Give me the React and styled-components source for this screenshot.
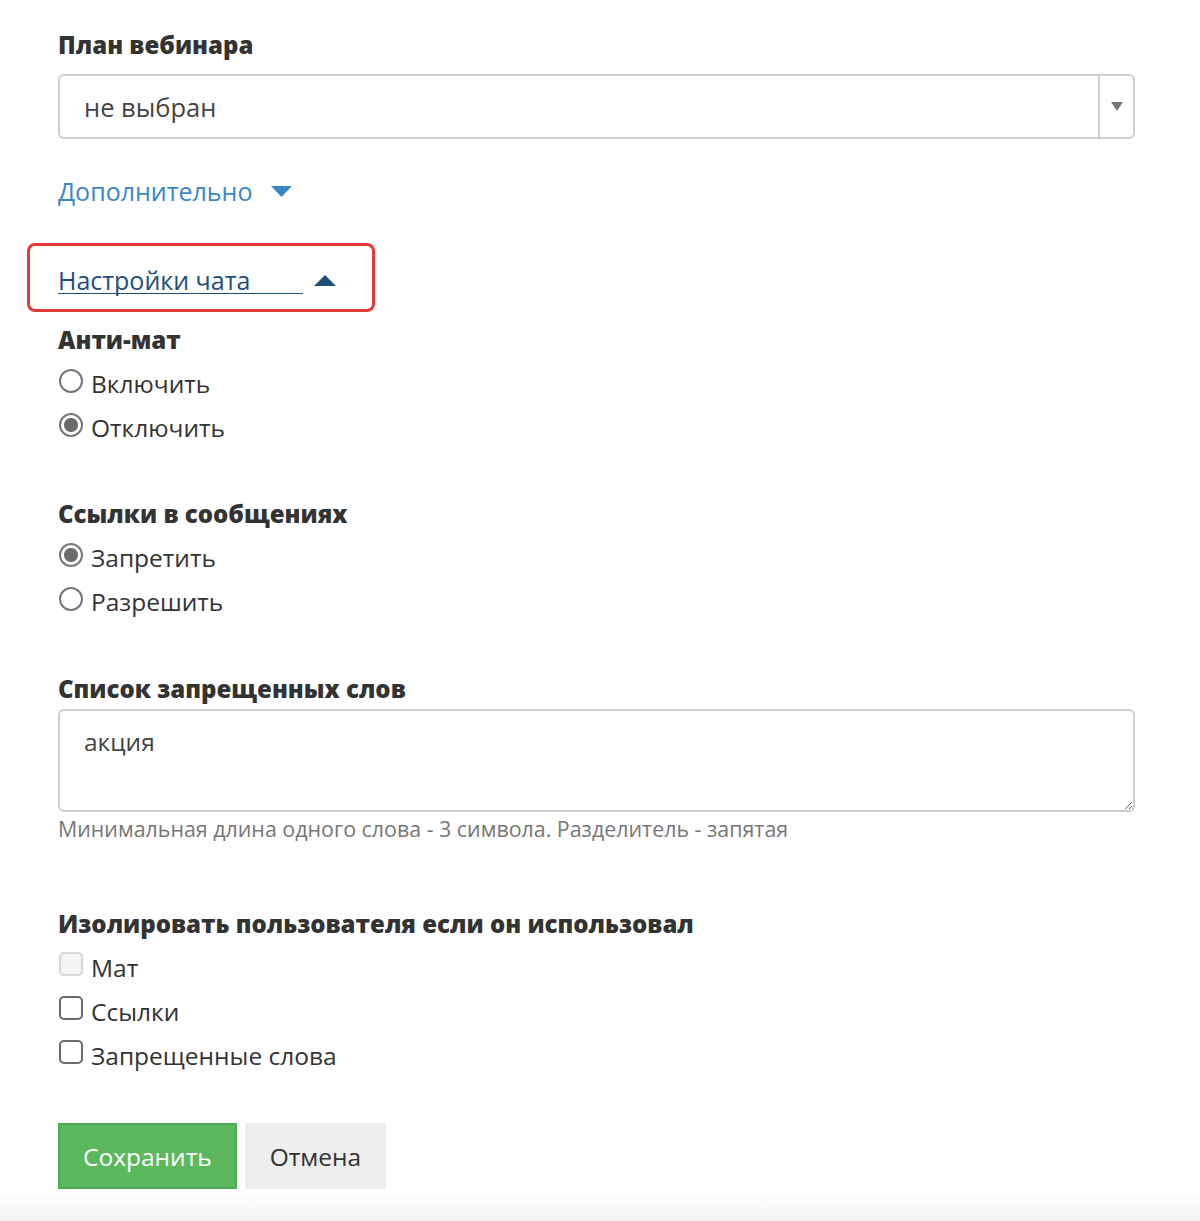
import React, { useState } from "react";
import styled, { createGlobalStyle } from "styled-components";

const GlobalStyle = createGlobalStyle`
    body {
        margin: 0;
        background: #fff;
        font-family: "Open Sans", "Noto Sans", sans-serif;
        color: #333;
    }
`;

const Page = styled.div`
    min-height: 1221px;
    box-sizing: border-box;
    padding: 28px 65px 0 58px;
    background: linear-gradient(to bottom, #fff 0, #fff 1190px, #f3f3f3 1221px);
`;

const Label = styled.div`
    font-size: 24px;
    font-weight: 800;
    color: #333;
    line-height: 34px;
    margin-bottom: ${props => props.mb ?? 4}px;
`;

const SelectBox = styled.div`
    display: flex;
    height: 65px;
    box-sizing: border-box;
    border: 2px solid #cfcfcf;
    border-radius: 6px;
    margin-top: 12px;
`;

const SelectValue = styled.div`
    flex: 1;
    display: flex;
    align-items: center;
    padding-left: 24px;
    font-size: 25.5px;
    color: #444;
`;

const SelectArrow = styled.div`
    width: 33px;
    border-left: 2px solid #cfcfcf;
    display: flex;
    align-items: center;
    justify-content: center;
`;

const More = styled.a`
    display: flex;
    align-items: center;
    gap: 19px;
    width: fit-content;
    margin-top: 35px;
    font-size: 25px;
    line-height: 34px;
    color: #3a87c7;
    text-decoration: none;
    cursor: pointer;
`;

const Highlight = styled.div`
    display: flex;
    align-items: flex-end;
    gap: 11px;
    width: 348px;
    height: 69px;
    box-sizing: border-box;
    margin: 35px 0 0 -31px;
    padding: 0 0 15px 28px;
    border: 3px solid #e43b36;
    border-radius: 8px;
    cursor: pointer;
`;

const Underlined = styled.span`
    display: block;
    width: 245px;
    font-size: 25px;
    line-height: 25px;
    color: #1f4f7c;
    border-bottom: 1px solid #1f4f7c;
`;

const Group = styled.div`
    margin-top: ${props => props.mt || 0}px;
    margin-bottom: ${props => props.mb || 0}px;
`;

const Option = styled.label`
    display: flex;
    align-items: center;
    gap: 8px;
    height: 44px;
    font-size: 24.5px;
    color: #333;
    cursor: pointer;
`;

const Radio = styled.input.attrs({ type: "radio" })`
    appearance: none;
    margin: 0 0 0 1px;
    width: 24px;
    height: 24px;
    border: 2px solid #777;
    border-radius: 50%;
    box-sizing: border-box;
    background: #fff;
    position: relative;
    top: -2px;

    &:checked {
        background: radial-gradient(circle, #6a6a6a 0 6.5px, #fff 7.5px);
    }
`;

const Checkbox = styled.input.attrs({ type: "checkbox" })`
    appearance: none;
    margin: 0 0 0 1px;
    width: 24px;
    height: 24px;
    border: 2px solid ${props => props.disabled ? "#d8d8d8" : "#6a6a6a"};
    border-radius: 5px;
    box-sizing: border-box;
    background: ${props => props.disabled ? "#f4f4f4" : "#fff"};
    position: relative;
    top: -3px;
`;

const TextArea = styled.textarea`
    display: block;
    width: 100%;
    height: 103px;
    box-sizing: border-box;
    margin-top: 3px;
    padding: 14px 24px;
    border: 2px solid #cfcfcf;
    border-radius: 6px;
    font-family: "Open Sans", "Noto Sans", sans-serif;
    font-size: 24.5px;
    color: #444;
    resize: vertical;
    outline: none;
`;

const Hint = styled.div`
    font-size: 21.4px;
    color: #777;
    margin-top: 4px;
    line-height: 26px;
`;

const Buttons = styled.div`
    display: flex;
    gap: 8px;
`;

const Button = styled.button`
    height: 66px;
    padding: 0 ${props => props.px}px;
    font-family: "Open Sans", "Noto Sans", sans-serif;
    font-size: 24.5px;
    border: 2px solid ${props => props.primary ? "#4cae4c" : "#eeeeee"};
    background: ${props => props.primary ? "#5cb85c" : "#eeeeee"};
    color: ${props => props.primary ? "#fff" : "#333"};
    cursor: pointer;
`;

const Arrow = styled.svg`
    display: block;
    flex: none;
    margin-bottom: ${props => props.mb || 0}px;
`;

const Triangle = ({ dir, color, w, h, mb }) => (
    <Arrow width={w} height={h} viewBox={`0 0 ${w} ${h}`} mb={mb}>
        {dir === "down"
            ? <polygon points={`0,0 ${w},0 ${w / 2},${h}`} fill={color} />
            : <polygon points={`0,${h} ${w},${h} ${w / 2},0`} fill={color} />}
    </Arrow>
);

export default function App() {
    const [antiMat, setAntiMat] = useState("off")
    const [links, setLinks] = useState("deny")

    return (
        <Page>
            <GlobalStyle />
            <Label mb={0}>План вебинара</Label>
            <SelectBox>
                <SelectValue>не выбран</SelectValue>
                <SelectArrow>
                    <Triangle dir="down" color="#777" w={12} h={9} />
                </SelectArrow>
            </SelectBox>

            <More>
                <span>Дополнительно</span>
                <Triangle dir="down" color="#3a87c7" w={21} h={11} />
            </More>

            <Highlight>
                <Underlined>Настройки чата</Underlined>
                <Triangle dir="up" color="#1f4f7c" w={22} h={11} mb={8} />
            </Highlight>

            <Group mt={11} mb={48}>
                <Label>Анти-мат</Label>
                <Option>
                    <Radio name="antimat" checked={antiMat === "on"} onChange={() => setAntiMat("on")} />
                    Включить
                </Option>
                <Option>
                    <Radio name="antimat" checked={antiMat === "off"} onChange={() => setAntiMat("off")} />
                    Отключить
                </Option>
            </Group>

            <Group mb={49}>
                <Label>Ссылки в сообщениях</Label>
                <Option>
                    <Radio name="links" checked={links === "deny"} onChange={() => setLinks("deny")} />
                    Запретить
                </Option>
                <Option>
                    <Radio name="links" checked={links === "allow"} onChange={() => setLinks("allow")} />
                    Разрешить
                </Option>
            </Group>

            <Group mb={65}>
                <Label mb={0}>Список запрещенных слов</Label>
                <TextArea defaultValue="акция" />
                <Hint>Минимальная длина одного слова - 3 символа. Разделитель - запятая</Hint>
            </Group>

            <Group mb={46}>
                <Label>Изолировать пользователя если он использовал</Label>
                <Option>
                    <Checkbox disabled />
                    Мат
                </Option>
                <Option>
                    <Checkbox />
                    Ссылки
                </Option>
                <Option>
                    <Checkbox />
                    Запрещенные слова
                </Option>
            </Group>

            <Buttons>
                <Button primary px={23}>Сохранить</Button>
                <Button px={23}>Отмена</Button>
            </Buttons>
        </Page>
    )
}
